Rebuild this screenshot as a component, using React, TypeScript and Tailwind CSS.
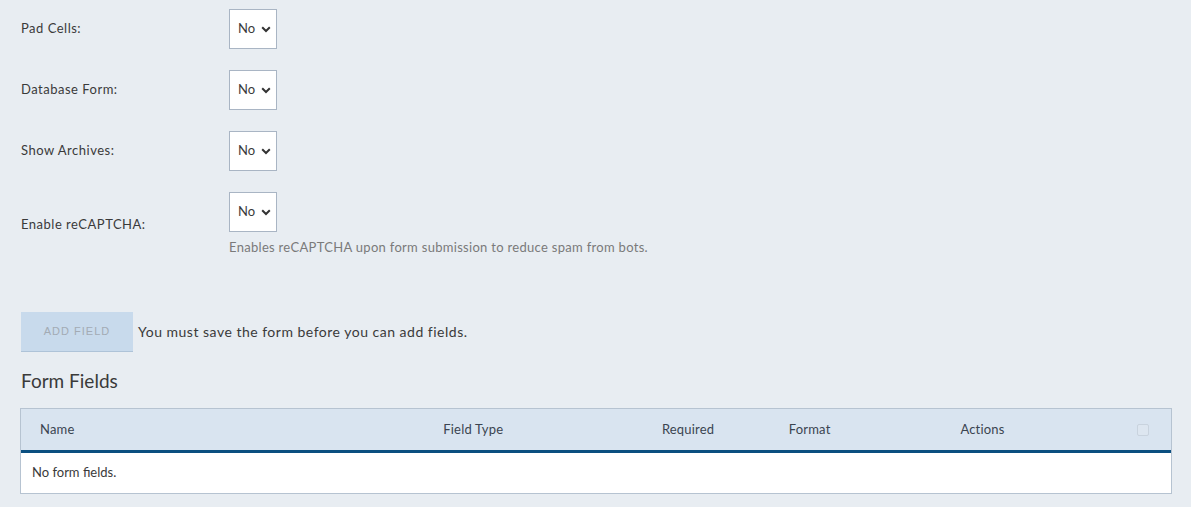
import React from "react";

// ============================================================================
// DATA
// ============================================================================

const settings = [
  { label: "Pad Cells:" },
  { label: "Database Form:" },
  { label: "Show Archives:" },
  {
    label: "Enable reCAPTCHA:",
    help: "Enables reCAPTCHA upon form submission to reduce spam from bots.",
  },
];

const columns = [
  { title: "Name", w: "w-[404px]" },
  { title: "Field Type", w: "w-[219px]" },
  { title: "Required", w: "w-[127px]" },
  { title: "Format", w: "w-[172px]" },
  { title: "Actions", w: "w-[177px]" },
];

// ============================================================================
// PARTS
// ============================================================================

function YesNoSelect() {
  return (
    <div className="flex h-[40px] w-[48px] items-center justify-between border border-[#a9b5c4] bg-white pl-[8px] pr-[5px] text-[13px] text-[#3a3a3a]">
      <span>No</span>
      <svg width="10" height="7" viewBox="0 0 10 7" className="text-[#333]">
        <path
          d="M1.2 1.3 L5 5 L8.8 1.3"
          fill="none"
          stroke="currentColor"
          strokeWidth="2"
        />
      </svg>
    </div>
  );
}

export default function App() {
  return (
    <div
      className="min-h-[507px] bg-[#e8edf2] px-[20px] pt-[9px] text-[#3a3a3a]"
      style={{ fontFamily: "Lato, 'Noto Sans', sans-serif" }}
    >
      {/* Settings */}
      <div className="flex flex-col gap-[21px]">
        {settings.map((s) => (
          <div key={s.label} className="flex items-center">
            <div className="w-[209px] pl-[1px] text-[13px] tracking-[0.5px] text-[#3a3a3a]">
              {s.label}
            </div>
            <div className="flex flex-col">
              <YesNoSelect />
              {s.help && (
                <div className="mt-[6px] text-[13px] tracking-[0.3px] text-[#7a7a7a]">
                  {s.help}
                </div>
              )}
            </div>
          </div>
        ))}
      </div>

      {/* Add field */}
      <div className="mt-[54px] flex items-center pl-[1px]">
        <button
          disabled
          className="h-[40px] w-[112px] border-b border-[#aec3d8] bg-[#c8daec] text-[11px] tracking-[1px] text-[#a3abb4]"
          style={{ fontFamily: "'Liberation Sans', Arial, sans-serif" }}
        >
          ADD FIELD
        </button>
        <span className="ml-[5px] text-[14px] tracking-[0.5px] text-[#3a3a3a]">
          You must save the form before you can add fields.
        </span>
      </div>

      <h2 className="mt-[17px] pl-[1px] text-[19px] leading-[24px] text-[#3a3a3a]">
        Form Fields
      </h2>

      {/* Table */}
      <div className="mt-[15px] w-[1152px] border border-[#b6c3d1]">
        <div className="flex h-[44px] items-center border-b-[3px] border-[#0b4f80] bg-[#d9e4f0] pt-[1px] text-[13px] tracking-[0.2px] text-[#3b4450]">
          {columns.map((c) => (
            <div key={c.title} className={`${c.w} pl-[19px]`}>
              {c.title}
            </div>
          ))}
          <div className="flex w-[53px] pl-[19px]">
            <div className="h-[12px] w-[12px] rounded-[2px] border border-[#c9d3de] bg-[#dde6f0]" />
          </div>
        </div>
        <div className="flex h-[40px] items-center bg-white pl-[11px] text-[13px] text-[#3a3a3a]">
          No form fields.
        </div>
      </div>
    </div>
  );
}
